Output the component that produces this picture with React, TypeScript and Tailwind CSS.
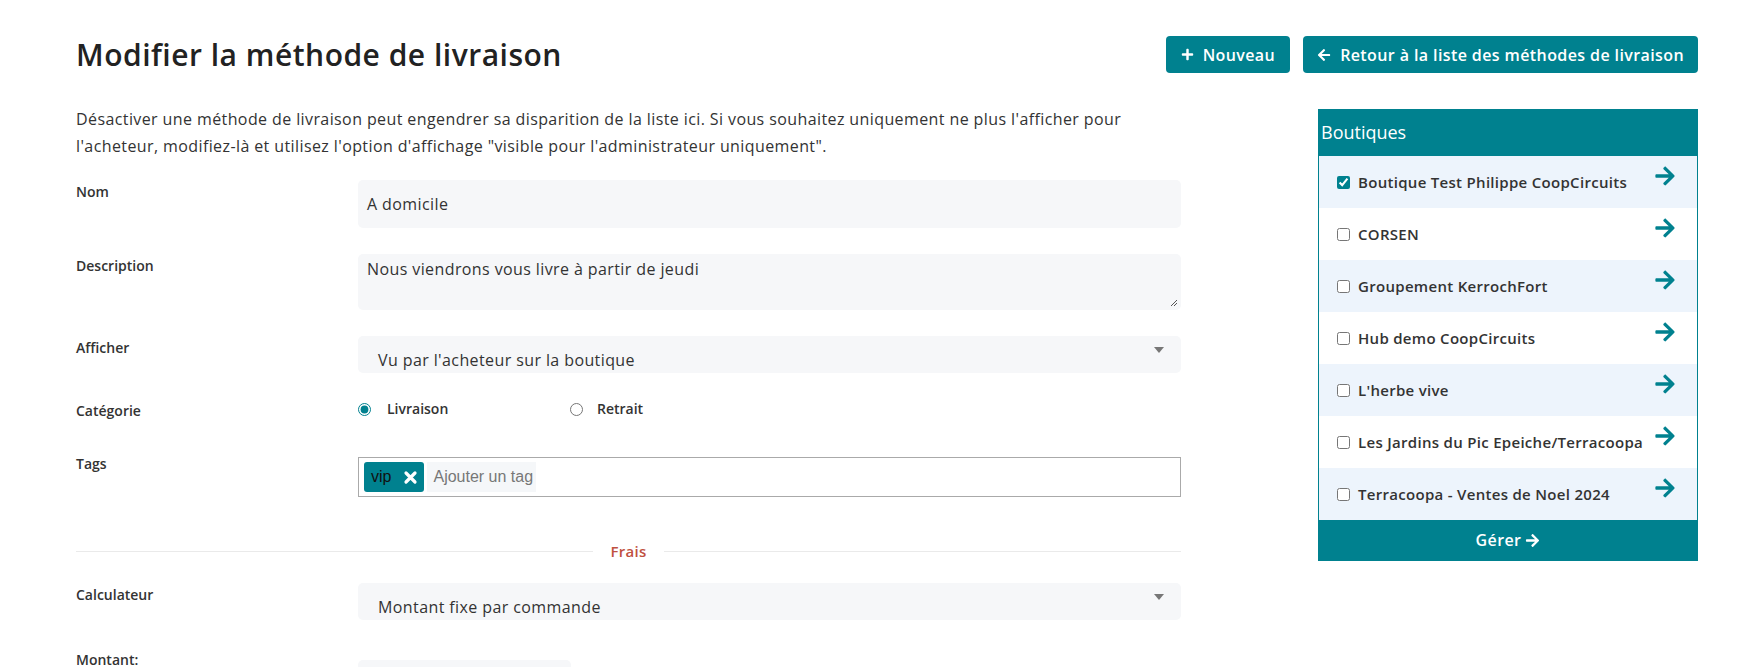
import { FaPlus, FaArrowLeft, FaArrowRight } from 'react-icons/fa';

const boutiques = [
  { name: 'Boutique Test Philippe CoopCircuits', checked: true },
  { name: 'CORSEN', checked: false },
  { name: 'Groupement KerrochFort', checked: false },
  { name: 'Hub demo CoopCircuits', checked: false },
  { name: "L'herbe vive", checked: false },
  { name: 'Les Jardins du Pic Epeiche/Terracoopa', checked: false },
  { name: 'Terracoopa - Ventes de Noel 2024', checked: false },
];

function Label({ children }: { children: React.ReactNode }) {
  return <div className="w-[282px] shrink-0 pt-[2px] text-[14px] leading-[20px] font-semibold text-[#333]">{children}</div>;
}

function SelectBox({ value }: { value: string }) {
  return (
    <div className="relative flex-1 h-[37px] bg-[#f6f7f9] rounded-[5px] pl-[20px] pt-[12px] text-[16px] leading-[24px] tracking-[0.4px] text-[#333]">
      {value}
      <span className="absolute right-[17px] top-[11px] w-0 h-0 border-l-[5px] border-r-[5px] border-t-[6px] border-l-transparent border-r-transparent border-t-[#777]" />
    </div>
  );
}

export default function App() {
  return (
    <div className="min-h-[667px] bg-white pl-[76px] pr-[46px] font-['Open_Sans',sans-serif] text-[#333]">
      {/* Header */}
      <div className="flex items-center justify-between pt-[36px] h-[73px]">
        <h1 className="text-[30px] leading-[34px] font-semibold tracking-[0.5px] text-[#222]">Modifier la méthode de livraison</h1>
        <div className="flex gap-[13px]">
          <button className="h-[37px] px-[15px] flex items-center gap-[9px] bg-[#00818f] text-white text-[16px] tracking-[0.4px] font-semibold rounded-[4px]">
            <FaPlus size={13} /> Nouveau
          </button>
          <button className="h-[37px] px-[14px] flex items-center gap-[9px] bg-[#00818f] text-white text-[16px] tracking-[0.4px] font-semibold rounded-[4px]">
            <FaArrowLeft size={14} /> Retour à la liste des méthodes de livraison
          </button>
        </div>
      </div>

      <div className="flex mt-[33px]">
        {/* Form */}
        <div className="w-[1105px]">
          <p className="text-[16px] leading-[27px] tracking-[0.4px] text-[#333]">
            Désactiver une méthode de livraison peut engendrer sa disparition de la liste ici. Si vous souhaitez uniquement ne plus l'afficher pour l'acheteur, modifiez-là et utilisez l'option d'affichage "visible pour l'administrateur uniquement".
          </p>

          <div className="flex items-start mt-[20px]">
            <Label>Nom</Label>
            <div className="flex-1 h-[48px] bg-[#f6f7f9] rounded-[5px] pl-[9px] flex items-center text-[16px] tracking-[0.4px]">A domicile</div>
          </div>

          <div className="flex items-start mt-[26px]">
            <Label>Description</Label>
            <div className="relative flex-1 h-[56px] bg-[#f6f7f9] rounded-[5px] pl-[9px] pt-[2px] text-[16px] leading-[26px] tracking-[0.4px]">
              Nous viendrons vous livre à partir de jeudi
              <svg className="absolute right-[3px] bottom-[3px]" width="9" height="9" viewBox="0 0 9 9">
                <path d="M8 2 L2 8 M8 5 L5 8" stroke="#555" strokeWidth="1" />
              </svg>
            </div>
          </div>

          <div className="flex items-start mt-[26px]">
            <Label>Afficher</Label>
            <SelectBox value="Vu par l'acheteur sur la boutique" />
          </div>

          <div className="flex items-start mt-[26px]">
            <Label>Catégorie</Label>
            <div className="flex text-[14px] leading-[20px] font-semibold">
              <label className="w-[212px] flex items-center gap-[16px]">
                <input type="radio" name="cat" defaultChecked className="w-[13px] h-[13px] m-0 accent-[#00818f]" />
                Livraison
              </label>
              <label className="flex items-center gap-[14px]">
                <input type="radio" name="cat" className="w-[13px] h-[13px] m-0 accent-[#00818f]" />
                Retrait
              </label>
            </div>
          </div>

          <div className="flex items-start mt-[31px]">
            <Label>Tags</Label>
            <div className="flex-1 mt-[5px] h-[40px] border border-[#aaa] flex items-center pl-[5px] gap-[3px] font-['Liberation_Sans',Arial,sans-serif] text-[16px]">
              <span className="h-[30px] bg-[#00818f] rounded-[3px] flex items-center pl-[7px] pr-[6px] gap-[12px] text-[#111]">
                vip
                <svg width="15" height="15" viewBox="0 0 15 15">
                  <path d="M3 3 L12 12 M12 3 L3 12" stroke="white" strokeWidth="3.2" strokeLinecap="round" />
                </svg>
              </span>
              <span className="h-[30px] bg-[#f5f7f9] flex items-center pl-[6px] pr-[3px] text-[#777]">Ajouter un tag</span>
            </div>
          </div>

          <div className="flex items-center mt-[44px]">
            <div className="flex-1 h-px bg-[#eaeaea]" />
            <span className="px-[17px] text-[15px] leading-[20px] tracking-[0.3px] font-semibold text-[#c0513f]">Frais</span>
            <div className="flex-1 h-px bg-[#eaeaea]" />
          </div>

          <div className="flex items-start mt-[22px]">
            <Label>Calculateur</Label>
            <SelectBox value="Montant fixe par commande" />
          </div>

          <div className="flex items-start mt-[28px]">
            <Label>Montant:</Label>
            <div className="w-[213px] h-[40px] mt-[12px] bg-[#f6f7f9] rounded-[5px]" />
          </div>
        </div>

        {/* Boutiques panel */}
        <div className="w-[380px] ml-auto mt-[3px] self-start border border-[#00818f]">
          <div className="h-[46px] bg-[#00818f] text-white text-[18px] leading-[24px] pl-[2px] pt-[10px]">Boutiques</div>
          {boutiques.map((b, i) => (
            <div key={b.name} className={`h-[52px] flex items-start justify-between pl-[18px] pr-[21px] ${i % 2 === 0 ? 'bg-[#edf4fc]' : 'bg-white'}`}>
              <label className="flex items-center gap-[8px] mt-[15px] text-[15px] leading-[22px] tracking-[0.3px] font-semibold text-[#333]">
                <input type="checkbox" defaultChecked={b.checked} className="w-[13px] h-[13px] m-0 accent-[#00818f]" />
                {b.name}
              </label>
              <FaArrowRight size={22} className="mt-[9px] text-[#00818f]" />
            </div>
          ))}
          <div className="h-[40px] bg-[#00818f] text-white text-[16px] tracking-[0.4px] font-semibold flex items-center justify-center gap-[4px]">
            Gérer <FaArrowRight size={15} />
          </div>
        </div>
      </div>
    </div>
  );
}
